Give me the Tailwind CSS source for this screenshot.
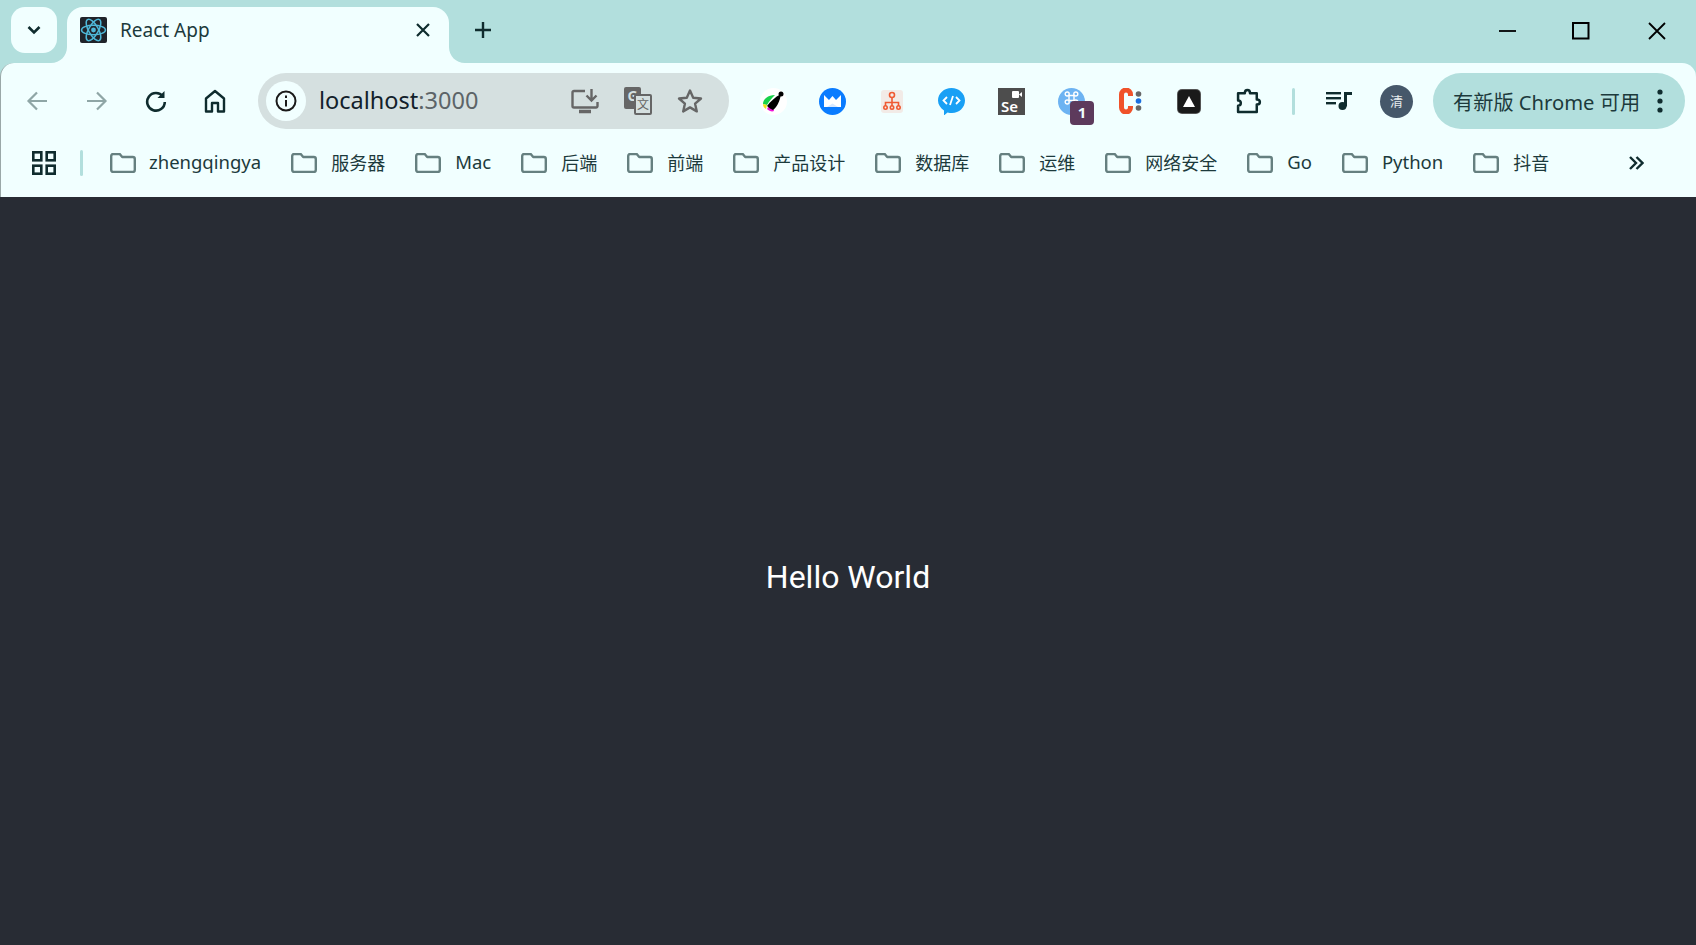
<!DOCTYPE html>
<html lang="en">
<head>
    <meta charset="UTF-8">
    <title>React App</title>
    <script src="https://cdn.jsdelivr.net/npm/@tailwindcss/browser@4"></script>
</head>
<body class="h-[945px] w-[1696px] overflow-hidden bg-[#b2dfdd] font-['Noto_Sans','Noto_Sans_CJK_SC',sans-serif] text-[#0f2c2e]">
    <!-- tab strip -->
    <div class="flex h-[63px] items-start pl-[11px] pt-[7px]">
        <div class="flex h-[46px] w-[46px] items-center justify-center rounded-[14px] bg-[#f1ffff]">
            <svg class="h-[16px] w-[16px]" viewBox="0 0 16 16" fill="none" stroke="#0f2c2e" stroke-width="2.6"><path d="M2.5 5l5.5 5.5L13.500 5"/></svg>
        </div>
        <div class="relative ml-[10px] flex h-[56px] w-[382px] items-center rounded-t-[16px] bg-[#f1ffff] pl-[13px] pr-[19px] pb-[10px]">
            <svg class="absolute bottom-0 left-[-16px] h-[16px] w-[16px]" viewBox="0 0 16 16"><path d="M16 0v16H0c9 0 16-7 16-16z" fill="#f1ffff"/></svg>
            <svg class="absolute bottom-0 right-[-16px] h-[16px] w-[16px]" viewBox="0 0 16 16"><path d="M0 0v16h16C7 16 0 9 0 0z" fill="#f1ffff"/></svg>
            <svg class="h-[27px] w-[27px] shrink-0" viewBox="0 0 27 27">
                <rect width="27" height="26" rx="2" fill="#20232a"/>
                <g fill="none" stroke="#4fb8d8" stroke-width="1.500">
                    <ellipse cx="13.500" cy="13" rx="12" ry="4.800"/>
                    <ellipse cx="13.500" cy="13" rx="12" ry="4.800" transform="rotate(60 13.500 13)"/>
                    <ellipse cx="13.500" cy="13" rx="12" ry="4.800" transform="rotate(120 13.500 13)"/>
                </g>
                <circle cx="13.500" cy="13" r="2.400" fill="#4fb8d8"/>
            </svg>
            <span class="ml-[13px] text-[19px] leading-none text-[#1c3a3c]">React App</span>
            <svg class="ml-auto h-[14px] w-[14px]" viewBox="0 0 14 14" stroke="#0f2c2e" stroke-width="2.200"><path d="M1 1l12 12M13 1L1 13"/></svg>
        </div>
        <div class="ml-[25px] mt-[14px] flex h-[18px] w-[18px] items-center justify-center">
            <svg class="h-[18px] w-[18px]" viewBox="0 0 18 18" stroke="#0f2c2e" stroke-width="2.400"><path d="M9 1v16M1 9h16"/></svg>
        </div>
        <div class="ml-auto flex h-[34px] items-center pr-[30px] pt-[14px]">
            <svg class="h-[18px] w-[18px]" viewBox="0 0 18 18" stroke="#000" stroke-width="1.800"><path d="M1 9h17"/></svg>
            <svg class="ml-[56px] h-[18px] w-[18px]" viewBox="0 0 18 18" fill="none" stroke="#000" stroke-width="2"><rect x="1" y="1" width="15.500" height="15.500"/></svg>
            <svg class="ml-[58px] h-[18px] w-[18px]" viewBox="0 0 18 18" stroke="#000" stroke-width="1.800"><path d="M1 1l16 16M17 1L1 17"/></svg>
        </div>
    </div>

    <div class="rounded-t-[14px] border-l border-[#9aa8a8] bg-[#f1ffff]">
        <!-- toolbar -->
        <div class="flex h-[67px] items-center pb-[1px] pt-[10px]">
            <svg class="ml-[25px] h-[22px] w-[22px]" viewBox="0 0 22 22" fill="none" stroke="#8fa6a6" stroke-width="2.200"><path d="M21 11H3M11 2.500L2.500 11l8.500 8.500"/></svg>
            <svg class="ml-[38px] h-[22px] w-[22px]" viewBox="0 0 22 22" fill="none" stroke="#8fa6a6" stroke-width="2.200"><path d="M1 11h18M11 2.500l8.500 8.500-8.500 8.500"/></svg>
            <svg class="ml-[37px] h-[22px] w-[22px]" viewBox="0 0 22 22" fill="none" stroke="#0f2c2e" stroke-width="2.600"><path d="M18 6.500A8.800 8.800 0 1 0 19.800 12"/><path d="M19.500 1v7h-7" fill="#0f2c2e" stroke="none"/></svg>
            <svg class="ml-[36px] h-[24px] w-[24px]" viewBox="0 0 24 24" fill="none" stroke="#0f2c2e" stroke-width="2.400"><path d="M3 22.500V9.500L12 2l9 7.500v13h-6V14H9v8.500z" stroke-linejoin="round"/></svg>
            <div class="ml-[31px] flex h-[56px] w-[471px] items-center rounded-full bg-[#d5e0e0] pl-[8px] pr-[26px]">
                <div class="flex h-[40px] w-[40px] items-center justify-center rounded-full bg-[#f1ffff]">
                    <svg class="h-[22px] w-[22px]" viewBox="0 0 22 22" fill="none" stroke="#1a1a1a" stroke-width="2"><circle cx="11" cy="11" r="9.500"/><path d="M11 10v6.500M11 5.500v2.400"/></svg>
                </div>
                <span class="ml-[13px] text-[23.500px] leading-none text-[#12202a]">localhost<span class="text-[#5c6468]">:3000</span></span>
                <svg class="ml-auto h-[26px] w-[28px]" viewBox="0 0 28 26" fill="none" stroke="#666" stroke-width="2.400"><path d="M14 3H3a1.500 1.500 0 0 0-1.500 1.500V18A1.500 1.500 0 0 0 3 19.500h22a1.500 1.500 0 0 0 1.500-1.500v-4"/><path d="M8 23.500h12" stroke-width="3.500"/><path d="M20.500 1v11M15.500 7.500l5 5 5-5"/></svg>
                <div class="relative ml-[25px] h-[28px] w-[28px]">
                    <div class="absolute left-0 top-0 flex h-[22px] w-[17px] items-start justify-center rounded-[2px] bg-[#666] pt-[2px] text-[14px] font-bold leading-none text-[#d5e0e0]">G</div>
                    <div class="absolute bottom-0 right-0 flex h-[21px] w-[18px] items-center justify-center rounded-[2px] border-2 border-[#666] bg-[#d5e0e0] text-[12px] leading-none text-[#666]">文</div>
                </div>
                <svg class="ml-[25px] h-[26px] w-[26px]" viewBox="0 0 26 26" fill="none" stroke="#666" stroke-width="2.400"><path d="M13 2.500l3.200 7.200 7.800.8-5.900 5.200 1.700 7.700-6.800-4-6.800 4 1.700-7.700L2 10.500l7.800-.8z" stroke-linejoin="round"/></svg>
            </div>
            <!-- extensions -->
            <svg class="ml-[31px] h-[27px] w-[27px]" viewBox="0 0 27 27"><circle cx="13.500" cy="13.500" r="13.500" fill="#fff"/><path d="M3 16c0-5 5-9 12-9-3 3-6 6-8 10z" fill="#19d24a"/><path d="M3 16l4 1-1 4c-2-1-3-3-3-5z" fill="#f5e21a"/><path d="M7 21c1-2 3-4 5-5l2 7c-2 1-5 0-7-2z" fill="#f016d8"/><path d="M7 18c3-4 8-9 14-12-1 7-4 13-8 16-2-1-4-2-6-4z" fill="#000"/><circle cx="21" cy="6" r="2.500" fill="#000"/></svg>
            <svg class="ml-[32px] h-[27px] w-[27px]" viewBox="0 0 27 27"><circle cx="13.500" cy="13.500" r="13.500" fill="#0a7cff"/><path d="M5 7l5 5 3.500-4 3.500 4 5-5v12H5z" fill="#fff"/><path d="M8 19l5.500-3.500L19 19z" fill="#d8e9ff"/></svg>
            <div class="ml-[35px] flex h-[23px] w-[22px] items-center justify-center rounded-[3px] bg-[#f2ebe7]">
                <svg class="h-[20px] w-[20px]" viewBox="0 0 20 20" fill="none" stroke="#ef5a32" stroke-width="1.600"><circle cx="10" cy="4" r="2.500"/><path d="M10 6.500V11M3.500 15v-3.500h13V15M10 11v4"/><circle cx="3.500" cy="16.500" r="1.700"/><circle cx="10" cy="16.500" r="1.700"/><circle cx="16.500" cy="16.500" r="1.700"/></svg>
            </div>
            <svg class="ml-[35px] h-[27px] w-[27px]" viewBox="0 0 27 27"><path d="M13.500 0C21 0 27 5.500 27 12.500S21 25 14 25c-1.500 0-3 0-4.500-.5L6 27.500V22.500C2.500 20 0 16.500 0 12.500 0 5.500 6 0 13.500 0z" fill="#19a0f5"/><path d="M9 9l-3.500 3.500L9 16M18 9l3.500 3.500L18 16M15 8l-3 9" fill="none" stroke="#fff" stroke-width="1.800"/></svg>
            <div class="relative ml-[33px] h-[27px] w-[27px] overflow-hidden bg-[#4d4d4d] text-white">
                <svg class="absolute right-[3px] top-[3px] h-[7px] w-[10px]" viewBox="0 0 10 7" fill="#fff"><rect width="7" height="7" rx="1"/><path d="M7 3.500L10 1v5z"/></svg>
                <span class="absolute bottom-[1px] left-[3px] text-[15px] font-semibold leading-none">Se</span>
            </div>
            <div class="relative ml-[33px] h-[27px] w-[27px] rounded-full bg-[#6db3f2]">
                <svg class="absolute left-[6px] top-[3px] h-[14px] w-[15px]" viewBox="0 0 15 14" fill="none" stroke="#fff" stroke-width="1.400"><path d="M5 4.500h5v5H5z"/><circle cx="3.200" cy="3" r="2"/><circle cx="11.800" cy="3" r="2"/><circle cx="3.200" cy="11" r="2"/><circle cx="11.800" cy="11" r="2"/></svg>
                <div class="absolute left-[12px] top-[13px] flex h-[24px] w-[24px] items-center justify-center rounded-[4px] bg-[#5d3a5c] text-[15px] font-bold leading-none text-[#f1ffff]">1</div>
            </div>
            <svg class="ml-[33px] h-[26px] w-[26px]" viewBox="0 0 26 26" fill="none"><path d="M12.500 8V6.500a4.500 4.500 0 0 0-9 0v13a4.500 4.500 0 0 0 9 0V18" stroke="#f0522a" stroke-width="5"/><circle cx="20.500" cy="6" r="2.800" fill="#666"/><circle cx="20.500" cy="13" r="2.800" fill="#1a6fe0"/><circle cx="20.500" cy="20" r="2.800" fill="#666"/></svg>
            <div class="ml-[34px] flex h-[23px] w-[22px] items-center justify-center rounded-[4px] bg-[#1a1a1a] shadow-[0_0_0_1px_#555]">
                <svg class="h-[11px] w-[12px]" viewBox="0 0 12 11"><path d="M6 0l6 11H0z" fill="#fff"/></svg>
            </div>
            <svg class="ml-[36px] h-[27px] w-[27px]" viewBox="0 0 26 26" fill="none" stroke="#0f2c2e" stroke-width="2.400"><path d="M2 5h6.500c0-4 5-4 5 0H20v6c4 0 4 5 0 5v7H2v-6c3.500 0 3.500-5 0-5z" stroke-linejoin="round"/></svg>
            <div class="ml-[29px] h-[27px] w-[3px] rounded-sm bg-[#b2dfdd]"></div>
            <svg class="ml-[31px] h-[20px] w-[26px]" viewBox="0 0 26 20" fill="#0f2c2e"><rect y="1" width="15" height="2.400"/><rect y="6" width="15" height="2.400"/><rect y="11" width="10" height="2.400"/><path d="M18 1h8v3h-5v11.500h-3z"/><circle cx="16.500" cy="15" r="4"/></svg>
            <div class="ml-[28px] flex h-[33px] w-[33px] items-center justify-center rounded-full bg-[#46586a] text-[13px] leading-none text-[#e8eef0]">清</div>
            <div class="ml-[20px] flex h-[56px] w-[252px] items-center rounded-full bg-[#b2dfdd] pl-[20px]">
                <span class="whitespace-nowrap pt-[2px] text-[20.200px] leading-none text-[#1c3a3c]">有新版 Chrome 可用</span>
                <svg class="ml-auto mr-[22px] h-[24px] w-[6px]" viewBox="0 0 6 24" fill="#0f2c2e"><circle cx="3" cy="3" r="2.600"/><circle cx="3" cy="12" r="2.600"/><circle cx="3" cy="21" r="2.600"/></svg>
            </div>
        </div>
        <!-- bookmarks bar -->
        <div class="flex h-[67px] items-center pb-[2px] text-[18px] leading-none text-[#1c3a3c]">
            <svg class="ml-[31px] h-[24px] w-[24px] shrink-0" viewBox="0 0 24 24" fill="none" stroke="#0f2c2e" stroke-width="2.600"><rect x="1.300" y="1.300" width="8" height="8"/><rect x="14.700" y="1.300" width="8" height="8"/><rect x="1.300" y="14.700" width="8" height="8"/><rect x="14.700" y="14.700" width="8" height="8"/></svg>
            <div class="ml-[24px] h-[26px] w-[3px] shrink-0 rounded-sm bg-[#b2dfdd]"></div>
            <div class="ml-[27px] flex items-center gap-[30px]">
                <div class="flex items-center gap-[13px]"><svg class="h-[20px] w-[26px] shrink-0" viewBox="0 0 26 20" fill="none" stroke="#668080" stroke-width="2.400"><path d="M1.200 3a2 2 0 0 1 2-2h6.500l2.500 3h10.600a2 2 0 0 1 2 2v11a2 2 0 0 1-2 2H3.200a2 2 0 0 1-2-2z" stroke-linejoin="round"/></svg><span class="whitespace-nowrap text-[18.500px]">zhengqingya</span></div>
                <div class="flex items-center gap-[14px]"><svg class="h-[20px] w-[26px] shrink-0" viewBox="0 0 26 20" fill="none" stroke="#668080" stroke-width="2.400"><path d="M1.200 3a2 2 0 0 1 2-2h6.500l2.500 3h10.600a2 2 0 0 1 2 2v11a2 2 0 0 1-2 2H3.200a2 2 0 0 1-2-2z" stroke-linejoin="round"/></svg><span class="whitespace-nowrap">服务器</span></div>
                <div class="flex items-center gap-[14px]"><svg class="h-[20px] w-[26px] shrink-0" viewBox="0 0 26 20" fill="none" stroke="#668080" stroke-width="2.400"><path d="M1.200 3a2 2 0 0 1 2-2h6.500l2.500 3h10.600a2 2 0 0 1 2 2v11a2 2 0 0 1-2 2H3.200a2 2 0 0 1-2-2z" stroke-linejoin="round"/></svg><span class="whitespace-nowrap text-[18.500px]">Mac</span></div>
                <div class="flex items-center gap-[14px]"><svg class="h-[20px] w-[26px] shrink-0" viewBox="0 0 26 20" fill="none" stroke="#668080" stroke-width="2.400"><path d="M1.200 3a2 2 0 0 1 2-2h6.500l2.500 3h10.600a2 2 0 0 1 2 2v11a2 2 0 0 1-2 2H3.200a2 2 0 0 1-2-2z" stroke-linejoin="round"/></svg><span class="whitespace-nowrap">后端</span></div>
                <div class="flex items-center gap-[14px]"><svg class="h-[20px] w-[26px] shrink-0" viewBox="0 0 26 20" fill="none" stroke="#668080" stroke-width="2.400"><path d="M1.200 3a2 2 0 0 1 2-2h6.500l2.500 3h10.600a2 2 0 0 1 2 2v11a2 2 0 0 1-2 2H3.200a2 2 0 0 1-2-2z" stroke-linejoin="round"/></svg><span class="whitespace-nowrap">前端</span></div>
                <div class="flex items-center gap-[14px]"><svg class="h-[20px] w-[26px] shrink-0" viewBox="0 0 26 20" fill="none" stroke="#668080" stroke-width="2.400"><path d="M1.200 3a2 2 0 0 1 2-2h6.500l2.500 3h10.600a2 2 0 0 1 2 2v11a2 2 0 0 1-2 2H3.200a2 2 0 0 1-2-2z" stroke-linejoin="round"/></svg><span class="whitespace-nowrap">产品设计</span></div>
                <div class="flex items-center gap-[14px]"><svg class="h-[20px] w-[26px] shrink-0" viewBox="0 0 26 20" fill="none" stroke="#668080" stroke-width="2.400"><path d="M1.200 3a2 2 0 0 1 2-2h6.500l2.500 3h10.600a2 2 0 0 1 2 2v11a2 2 0 0 1-2 2H3.200a2 2 0 0 1-2-2z" stroke-linejoin="round"/></svg><span class="whitespace-nowrap">数据库</span></div>
                <div class="flex items-center gap-[14px]"><svg class="h-[20px] w-[26px] shrink-0" viewBox="0 0 26 20" fill="none" stroke="#668080" stroke-width="2.400"><path d="M1.200 3a2 2 0 0 1 2-2h6.500l2.500 3h10.600a2 2 0 0 1 2 2v11a2 2 0 0 1-2 2H3.200a2 2 0 0 1-2-2z" stroke-linejoin="round"/></svg><span class="whitespace-nowrap">运维</span></div>
                <div class="flex items-center gap-[14px]"><svg class="h-[20px] w-[26px] shrink-0" viewBox="0 0 26 20" fill="none" stroke="#668080" stroke-width="2.400"><path d="M1.200 3a2 2 0 0 1 2-2h6.500l2.500 3h10.600a2 2 0 0 1 2 2v11a2 2 0 0 1-2 2H3.200a2 2 0 0 1-2-2z" stroke-linejoin="round"/></svg><span class="whitespace-nowrap">网络安全</span></div>
                <div class="flex items-center gap-[14px]"><svg class="h-[20px] w-[26px] shrink-0" viewBox="0 0 26 20" fill="none" stroke="#668080" stroke-width="2.400"><path d="M1.200 3a2 2 0 0 1 2-2h6.500l2.500 3h10.600a2 2 0 0 1 2 2v11a2 2 0 0 1-2 2H3.200a2 2 0 0 1-2-2z" stroke-linejoin="round"/></svg><span class="whitespace-nowrap text-[18.500px]">Go</span></div>
                <div class="flex items-center gap-[14px]"><svg class="h-[20px] w-[26px] shrink-0" viewBox="0 0 26 20" fill="none" stroke="#668080" stroke-width="2.400"><path d="M1.200 3a2 2 0 0 1 2-2h6.500l2.500 3h10.600a2 2 0 0 1 2 2v11a2 2 0 0 1-2 2H3.200a2 2 0 0 1-2-2z" stroke-linejoin="round"/></svg><span class="whitespace-nowrap text-[18.500px]">Python</span></div>
                <div class="flex items-center gap-[14px]"><svg class="h-[20px] w-[26px] shrink-0" viewBox="0 0 26 20" fill="none" stroke="#668080" stroke-width="2.400"><path d="M1.200 3a2 2 0 0 1 2-2h6.500l2.500 3h10.600a2 2 0 0 1 2 2v11a2 2 0 0 1-2 2H3.200a2 2 0 0 1-2-2z" stroke-linejoin="round"/></svg><span class="whitespace-nowrap">抖音</span></div>
            </div>
            <svg class="ml-auto mr-[52px] h-[16px] w-[16px] shrink-0" viewBox="0 0 16 16" fill="none" stroke="#0f2c2e" stroke-width="2.400"><path d="M2 2l6 6-6 6M8.500 2l6 6-6 6"/></svg>
        </div>
    </div>

    <!-- page content -->
    <div class="flex h-[748px] items-center justify-center bg-[#282c34] pt-[12px] font-['Roboto',sans-serif] text-[32px] leading-none text-white">Hello World</div>
</body>
</html>
